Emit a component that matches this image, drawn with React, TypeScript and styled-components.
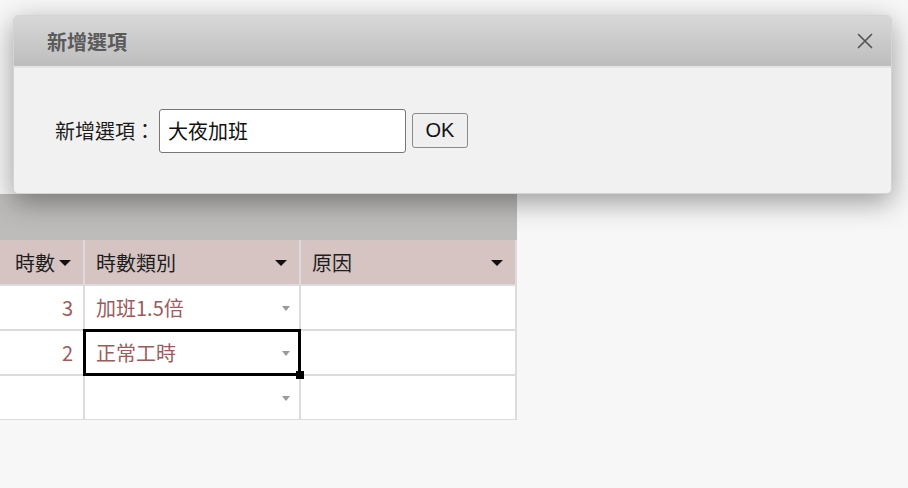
import React from "react";
import styled, { createGlobalStyle } from "styled-components";

const Global = createGlobalStyle`
  html, body { margin: 0; padding: 0; background: #f7f7f7; }
  body { font-family: "Noto Sans CJK TC", "Noto Sans", sans-serif; width: 908px; height: 488px; overflow: hidden; }
`;

const Page = styled.div`
  position: relative;
  width: 908px;
  height: 488px;
  padding-top: 194px;
  box-sizing: border-box;
`;

const Grid = styled.div`
  width: 517px;
`;

const Band = styled.div`
  height: 46px;
  background: #bdbcba;
`;

const Table = styled.div`
  display: grid;
  grid-template-columns: 83px 214px 214px;
  grid-template-rows: 44px 43px 43px 43px;
  column-gap: 2px;
  row-gap: 2px;
  background: #dcdcdc;
  border-right: 2px solid #dcdcdc;
  border-bottom: 1px solid #dcdcdc;
  width: 517px;
  box-sizing: border-box;
  position: relative;
`;

const HeadCell = styled.div<{ $compact?: boolean }>`
  background: #d5c4c1;
  display: flex;
  align-items: center;
  justify-content: ${(p) => (p.$compact ? "flex-end" : "space-between")};
  padding: 0 12px 0 ${(p) => (p.$compact ? "0" : "11px")};
  gap: 4px;
  font-size: 20px;
  color: #1e1e1e;
`;

const Caret = styled.span`
  width: 0;
  height: 0;
  border-left: 6px solid transparent;
  border-right: 6px solid transparent;
  border-top: 6px solid #111;
  margin-top: 2px;
`;

const Cell = styled.div<{ $align?: "right" | "left"; $selected?: boolean }>`
  position: relative;
  background: #fff;
  display: flex;
  align-items: center;
  justify-content: ${(p) => (p.$align === "right" ? "flex-end" : "space-between")};
  padding: 0 ${(p) => (p.$align === "right" ? "10px" : "9px")} 0 ${(p) => (p.$align === "right" ? "0" : "11px")};
  font-size: 20px;
  color: #9b5c5c;
  box-sizing: border-box;
  ${(p) =>
    p.$selected
      ? `outline: 3px solid #000; outline-offset: -1px; z-index: 2;`
      : ""}
`;

const CellCaret = styled.span`
  width: 0;
  height: 0;
  border-left: 4px solid transparent;
  border-right: 4px solid transparent;
  border-top: 5px solid #9a9a9a;
  margin-left: auto;
  margin-top: 1px;
`;

const Handle = styled.span`
  position: absolute;
  right: -5px;
  bottom: -5px;
  width: 8px;
  height: 8px;
  background: #000;
  z-index: 3;
`;

const Dialog = styled.div`
  position: absolute;
  left: 13px;
  top: 15px;
  width: 879px;
  height: 179px;
  border-radius: 5px;
  background: #f1f1f1;
  box-shadow: 0 8px 28px rgba(0, 0, 0, 0.38);
  border: 1px solid #d4d4d4;
  box-sizing: border-box;
  overflow: hidden;
  display: flex;
  flex-direction: column;
`;

const DialogHeader = styled.div`
  height: 50px;
  background: linear-gradient(#d8d8d8, #bdbdbd);
  border-bottom: 2px solid #e4e4e4;
  display: flex;
  align-items: center;
  justify-content: space-between;
  padding: 0 16px 0 33px;
  flex-shrink: 0;
`;

const Title = styled.div`
  font-size: 20px;
  font-weight: 700;
  color: #5a5a5a;
`;

const Close = styled.button`
  border: 0;
  background: none;
  padding: 0;
  width: 20px;
  height: 20px;
  display: flex;
  align-items: center;
  justify-content: center;
  cursor: pointer;
`;

const DialogBody = styled.div`
  flex: 1;
  display: flex;
  align-items: center;
  padding: 0 0 0 41px;
`;

const Label = styled.label`
  font-size: 20px;
  color: #1c1c1c;
  margin-right: 4px;
`;

const Input = styled.input`
  width: 247px;
  height: 44px;
  box-sizing: border-box;
  border: 1px solid #767676;
  border-radius: 3px;
  background: #fff;
  padding: 0 8px;
  font-family: "Noto Sans CJK TC", "Noto Sans", sans-serif;
  font-size: 20px;
  color: #111;
  outline: none;
`;

const OkButton = styled.button`
  margin-left: 6px;
  height: 35px;
  width: 56px;
  box-sizing: border-box;
  border: 1px solid #8a8a8a;
  border-radius: 3px;
  background: #efefef;
  font-family: "Liberation Sans", Arial, sans-serif;
  font-size: 20px;
  color: #111;
  padding: 0;
`;

export default function App() {
  const rows = [
    { n: "3", t: "加班1.5倍" },
    { n: "2", t: "正常工時", sel: true },
    { n: "", t: "" },
  ];
  return (
    <>
      <Global />
      <Page>
        <Grid>
          <Band />
          <Table>
            <HeadCell $compact>
              時數<Caret />
            </HeadCell>
            <HeadCell>
              時數類別<Caret />
            </HeadCell>
            <HeadCell>
              原因<Caret />
            </HeadCell>
            {rows.map((r, i) => (
              <React.Fragment key={i}>
                <Cell $align="right">{r.n}</Cell>
                <Cell $selected={r.sel}>
                  {r.t}
                  <CellCaret />
                  {r.sel && <Handle />}
                </Cell>
                <Cell />
              </React.Fragment>
            ))}
          </Table>
        </Grid>
        <Dialog>
          <DialogHeader>
            <Title>新增選項</Title>
            <Close aria-label="close">
              <svg width="16" height="16" viewBox="0 0 16 16">
                <path d="M1.5 1.5 L14.5 14.5 M14.5 1.5 L1.5 14.5" stroke="#555" strokeWidth="1.7" strokeLinecap="round" />
              </svg>
            </Close>
          </DialogHeader>
          <DialogBody>
            <Label>新增選項：</Label>
            <Input defaultValue="大夜加班" />
            <OkButton>OK</OkButton>
          </DialogBody>
        </Dialog>
      </Page>
    </>
  );
}
